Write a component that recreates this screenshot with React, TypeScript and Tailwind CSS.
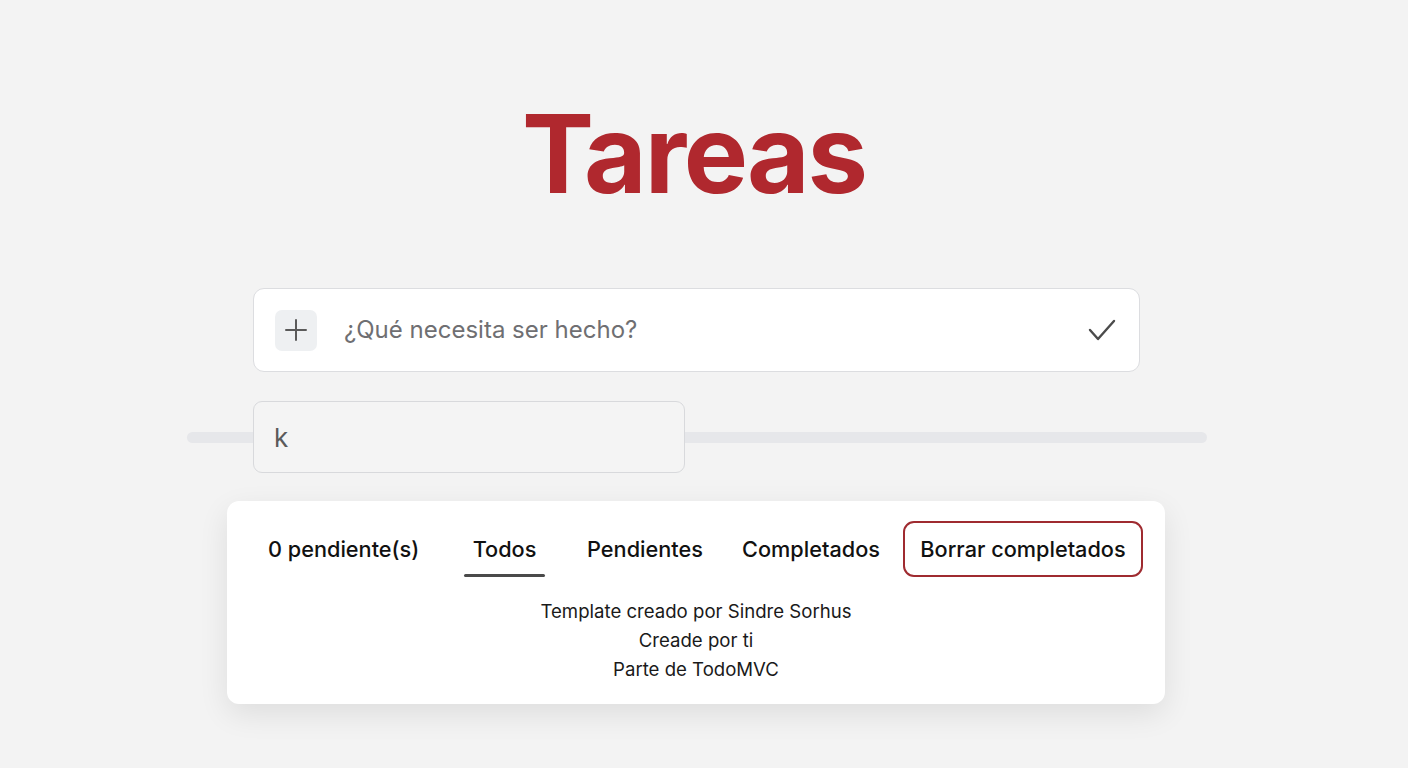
export default function App() {
    return (
        <div className="min-h-screen w-full bg-[#f3f3f3] font-['Inter',sans-serif]">
            <div className="ml-[187px] w-[1020px] pt-[100px]">
                <h1 className="pr-[6px] text-center text-[108px] font-bold leading-none tracking-[-0.02em] text-[#b0282e]">
                    Tareas
                </h1>

                <div className="ml-[66px] mt-[80px] flex h-[84px] w-[887px] items-center rounded-[11px] border-[1.5px] border-[#dcdde0] bg-white pl-[21px] pr-[23px]">
                    <div className="flex h-[41px] w-[42px] items-center justify-center rounded-[7px] bg-[#eef0f2]">
                        <svg width="22" height="22" viewBox="0 0 22 22" fill="none" stroke="#5a5a5a" strokeWidth="2" strokeLinecap="round">
                            <path d="M11 1v20M1 11h20" />
                        </svg>
                    </div>
                    <input
                        className="ml-[27px] flex-1 bg-transparent text-[24px] text-[#222] outline-none placeholder:text-[#6f6f72]"
                        placeholder="¿Qué necesita ser hecho?"
                    />
                    <svg width="28" height="24" viewBox="0 0 28 24" fill="none" stroke="#4b4b4b" strokeWidth="2.4" strokeLinecap="round" strokeLinejoin="round">
                        <path d="M2 12l8 9 16-18" />
                    </svg>
                </div>

                <div className="mt-[29px] flex h-[72px] items-center">
                    <div className="h-[11px] w-[66px] rounded-l-full bg-[#e6e7ea]" />
                    <div className="flex h-[72px] w-[432px] items-center rounded-[9px] border-[1.5px] border-[#d8d9dc] bg-[#f4f4f4] px-[20px] text-[26px] text-[#5a5a5a]">
                        k
                    </div>
                    <div className="h-[11px] flex-1 rounded-r-full bg-[#e6e7ea]" />
                </div>

                <div className="ml-[40px] mt-[28px] w-[938px] rounded-[12px] bg-white pb-[20px] pt-[20px] shadow-[0_10px_30px_rgba(0,0,0,0.09)]">
                    <div className="flex h-[56px] items-center whitespace-nowrap pl-[41px] text-[21.7px] font-medium text-[#111]">
                        <span className="w-[151px]">0 pendiente(s)</span>
                        <a className="relative ml-[45px] w-[81px] text-center">
                            Todos
                            <span className="absolute -bottom-[12px] left-0 right-0 h-[3px] rounded-full bg-[#4a4a4a]" />
                        </a>
                        <a className="ml-[41px] w-[118px] text-center">Pendientes</a>
                        <a className="ml-[37px] w-[140px] text-center">Completados</a>
                        <button className="ml-[22px] h-[56px] w-[240px] rounded-[11px] border-2 border-[#9f2b30] text-center font-medium text-[#111]">
                            Borrar completados
                        </button>
                    </div>
                    <div className="mt-[20px] flex flex-col items-center text-[18.6px] leading-[29px] text-[#1a1a1a]">
                        <p>Template creado por Sindre Sorhus</p>
                        <p>Creade por ti</p>
                        <p>Parte de TodoMVC</p>
                    </div>
                </div>
            </div>
        </div>
    )
}
